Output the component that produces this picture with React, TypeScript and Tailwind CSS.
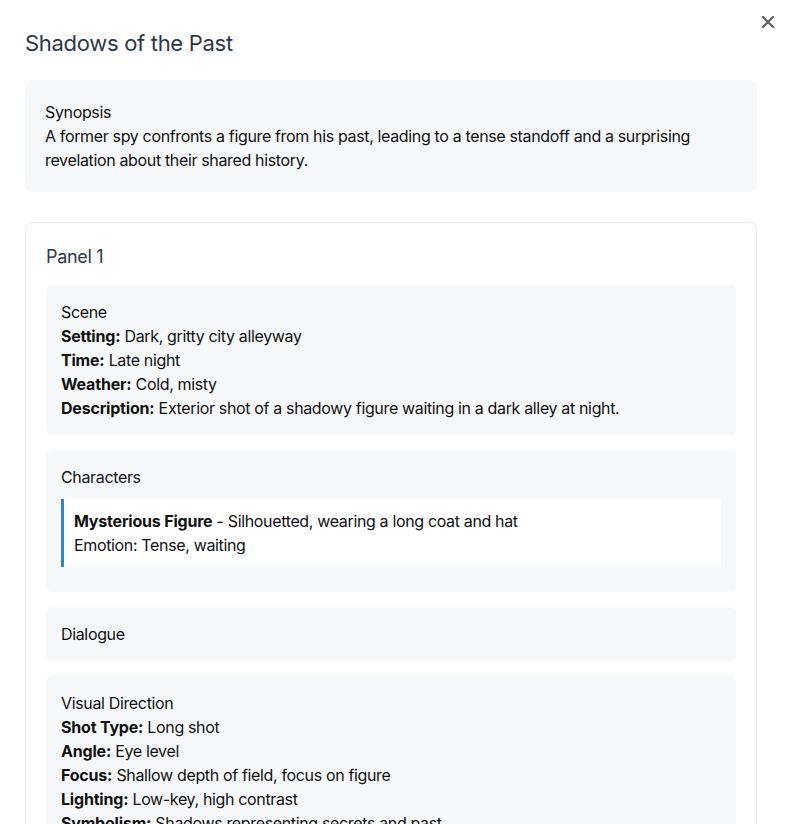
import React from "react";

const Row = ({ label, value }: { label: string; value: string }) => (
  <div>
    <span className="font-bold tracking-[-0.2px]">{label}:</span> {value}
  </div>
);

export default function App() {
  return (
    <div
      className="relative min-h-screen bg-white text-[16px] leading-[24px] tracking-[-0.35px] text-[#111111]"
      style={{ fontFamily: "Inter, 'Noto Sans', sans-serif" }}
    >
      <button className="absolute right-[10px] top-[15px] flex h-[14px] w-[14px] items-center justify-center text-[#5f5f5f]">
        <svg width="12" height="12" viewBox="0 0 12 12">
          <path d="M1 1L11 11M11 1L1 11" stroke="currentColor" strokeWidth="2.2" strokeLinecap="round" />
        </svg>
      </button>
      <div className="px-[25px] pt-[29px] pr-[28px]">
        <h1 className="text-[22px] leading-[28px] tracking-[-0.3px] text-[#2d3748]">Shadows of the Past</h1>
        <div className="mt-[23px] rounded-[8px] bg-[#f7f8fa] p-[20px]">
          <div>Synopsis</div>
          <div>
            A former spy confronts a figure from his past, leading to a tense standoff and a surprising
            revelation about their shared history.
          </div>
        </div>
        <div className="mt-[30px] rounded-[8px] border border-[#e2e8f0] px-[20px] pt-[20px] pb-[20px]">
          <h2 className="text-[18px] leading-[28px] tracking-[-0.3px] text-[#2d3748]">Panel 1</h2>
          <div className="mt-[14px] flex flex-col gap-[15px]">
            <div className="rounded-[6px] bg-[#f7f8fa] p-[15px]">
              <div>Scene</div>
              <Row label="Setting" value="Dark, gritty city alleyway" />
              <Row label="Time" value="Late night" />
              <Row label="Weather" value="Cold, misty" />
              <Row label="Description" value="Exterior shot of a shadowy figure waiting in a dark alley at night." />
            </div>
            <div className="rounded-[6px] bg-[#f7f8fa] p-[15px] pb-[25px]">
              <div>Characters</div>
              <div className="mt-[10px] border-l-[3px] border-[#3182ce] bg-white py-[10px] pl-[10px]">
                <div>
                  <span className="font-bold tracking-[-0.2px]">Mysterious Figure</span> - Silhouetted, wearing a long coat and hat
                </div>
                <div>Emotion: Tense, waiting</div>
              </div>
            </div>
            <div className="rounded-[6px] bg-[#f7f8fa] p-[15px]">
              <div>Dialogue</div>
            </div>
            <div className="rounded-[6px] bg-[#f7f8fa] p-[15px]">
              <div>Visual Direction</div>
              <Row label="Shot Type" value="Long shot" />
              <Row label="Angle" value="Eye level" />
              <Row label="Focus" value="Shallow depth of field, focus on figure" />
              <Row label="Lighting" value="Low-key, high contrast" />
              <Row label="Symbolism" value="Shadows representing secrets and past" />
            </div>
          </div>
        </div>
      </div>
    </div>
  );
}
